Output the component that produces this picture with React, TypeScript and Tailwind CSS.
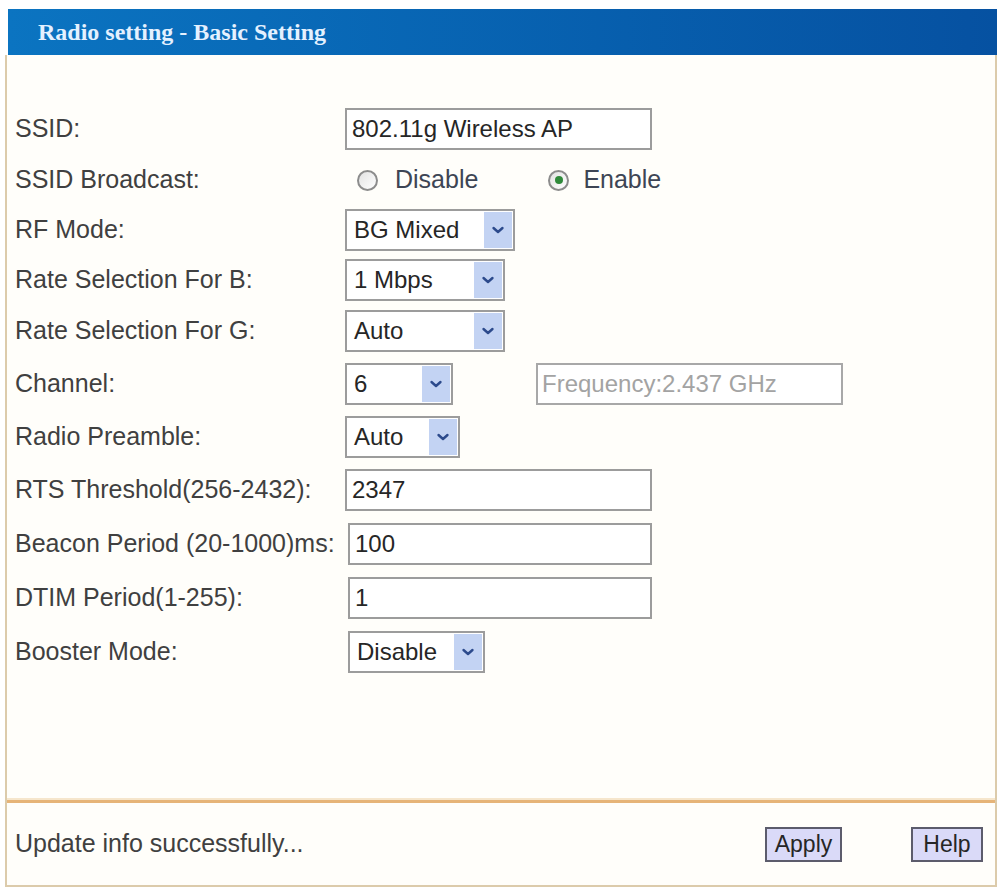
import React from 'react';

type Row =
  | { label: string; h: string; kind: 'text'; value: string; w: string; ml?: string }
  | { label: string; h: string; kind: 'select'; value: string; w: string; ml?: string; extra?: string }
  | { label: string; h: string; kind: 'radio' };

const rows: Row[] = [
  { label: 'SSID:', h: 'h-[53px]', kind: 'text', value: '802.11g Wireless AP', w: 'w-[307px]' },
  { label: 'SSID Broadcast:', h: 'h-[50px]', kind: 'radio' },
  { label: 'RF Mode:', h: 'h-[49px]', kind: 'select', value: 'BG Mixed', w: 'w-[170px]' },
  { label: 'Rate Selection For B:', h: 'h-[51px]', kind: 'select', value: '1 Mbps', w: 'w-[160px]' },
  { label: 'Rate Selection For G:', h: 'h-[52px]', kind: 'select', value: 'Auto', w: 'w-[160px]' },
  { label: 'Channel:', h: 'h-[53px]', kind: 'select', value: '6', w: 'w-[108px]', extra: 'Frequency:2.437 GHz' },
  { label: 'Radio Preamble:', h: 'h-[53px]', kind: 'select', value: 'Auto', w: 'w-[115px]' },
  { label: 'RTS Threshold(256-2432):', h: 'h-[53px]', kind: 'text', value: '2347', w: 'w-[307px]' },
  { label: 'Beacon Period (20-1000)ms:', h: 'h-[55px]', kind: 'text', value: '100', w: 'w-[304px]', ml: 'ml-[3px]' },
  { label: 'DTIM Period(1-255):', h: 'h-[54px]', kind: 'text', value: '1', w: 'w-[304px]', ml: 'ml-[3px]' },
  { label: 'Booster Mode:', h: 'h-[54px]', kind: 'select', value: 'Disable', w: 'w-[137px]', ml: 'ml-[3px]' },
];

const Chevron = () => (
  <svg width="14" height="10" viewBox="0 0 14 10">
    <path d="M2.5 3 L7 7 L11.5 3" fill="none" stroke="#2c4a8c" strokeWidth="2.4" strokeLinecap="round" strokeLinejoin="round" />
  </svg>
);

const Select = ({ value, w }: { value: string; w: string }) => (
  <div className={`${w} h-[42px] border-2 border-[#9c9c9c] bg-white flex items-stretch p-[1px]`}>
    <div className="flex-1 flex items-center pl-[6px] text-[24px] text-[#262626]">{value}</div>
    <div className="w-[28px] bg-[#c3d3f3] flex items-center justify-center">
      <Chevron />
    </div>
  </div>
);

const Radio = ({ checked }: { checked?: boolean }) => (
  <span className="w-[21px] h-[21px] rounded-full border-2 border-[#8c8c8c] bg-linear-to-br from-[#e2e2e2] to-white flex items-center justify-center">
    {checked && <span className="w-[8px] h-[8px] rounded-full bg-[#2f8a3a]" />}
  </span>
);

export default function App() {
  return (
    <div className="w-[1000px] h-[887px] bg-white pt-[9px] font-['Liberation_Sans',Arial,sans-serif]">
      <div className="ml-[8px] w-[989px] h-[46px] bg-linear-to-r from-[#0b74c1] to-[#0651a1] flex items-center pl-[30px]">
        <span className="font-['Liberation_Serif','Times_New_Roman',serif] font-bold text-[24px] text-[#e4f1ff]">
          Radio setting - Basic Setting
        </span>
      </div>

      <div className="ml-[5px] w-[992px] border-x-2 border-b-2 border-[#dccbab] bg-[#fffefa]">
        <div className="h-[743px] pt-[47px] pl-[8px]">
          {rows.map((r) => (
            <div key={r.label} className={`${r.h} flex items-center`}>
              <div className="w-[330px] text-[25px] text-[#404040] whitespace-nowrap">{r.label}</div>
              {r.kind === 'text' && (
                <div className={`${r.w} ${r.ml ?? ''} h-[42px] border-2 border-[#9c9c9c] bg-white flex items-center pl-[5px] text-[24px] text-[#262626]`}>
                  {r.value}
                </div>
              )}
              {r.kind === 'select' && (
                <div className={`${r.ml ?? ''} flex items-center`}>
                  <Select value={r.value} w={r.w} />
                  {r.extra && (
                    <div className="ml-[83px] w-[307px] h-[42px] border-2 border-[#a8a8a8] bg-white flex items-center pl-[4px] text-[24px] text-[#a3a3a3]">
                      {r.extra}
                    </div>
                  )}
                </div>
              )}
              {r.kind === 'radio' && (
                <div className="flex items-center text-[25px] text-[#3d4554]">
                  <span className="ml-[12px]"><Radio /></span>
                  <span className="ml-[17px]">Disable</span>
                  <span className="ml-[70px]"><Radio checked /></span>
                  <span className="ml-[14px]">Enable</span>
                </div>
              )}
            </div>
          ))}
        </div>
        <div className="h-[2px] bg-[#f6e6cc]" />
        <div className="h-[3px] bg-[#e6b478]" />
        <div className="h-[82px] flex items-center pl-[8px] pr-[12px]">
          <div className="flex-1 text-[25px] text-[#404040]">Update info successfully...</div>
          <button className="w-[77px] h-[35px] border-2 border-[#5c5c6c] bg-[#dadaf8] text-[23px] text-[#262626] flex items-center justify-center">
            Apply
          </button>
          <button className="ml-[69px] w-[72px] h-[35px] border-2 border-[#5c5c6c] bg-[#dadaf8] text-[23px] text-[#262626] flex items-center justify-center">
            Help
          </button>
        </div>
      </div>
    </div>
  );
}
